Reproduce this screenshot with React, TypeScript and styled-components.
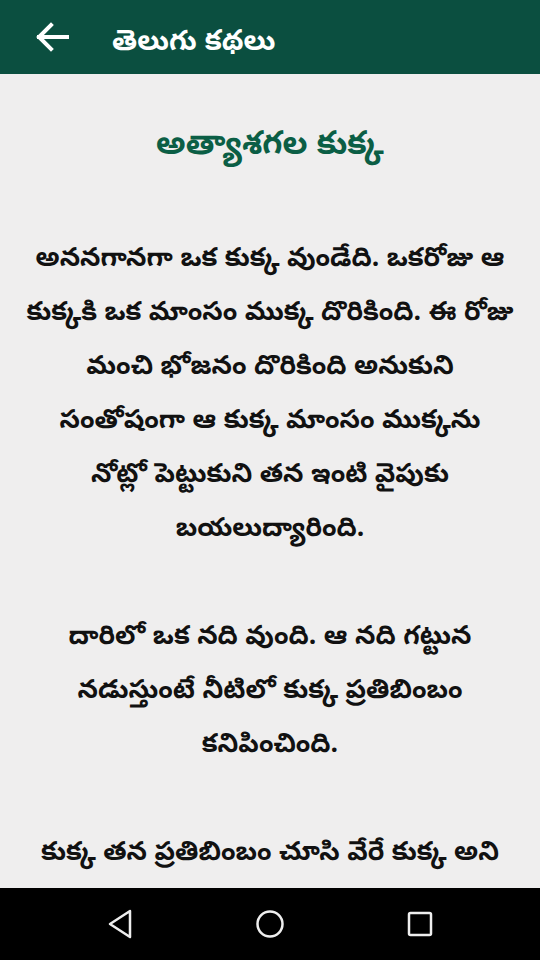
import styled, { createGlobalStyle } from "styled-components"

const GlobalStyle = createGlobalStyle`
    html, body {
        margin: 0;
        padding: 0;
        background-color: #efeeee;
    }
    body {
        font-family: "Noto Sans Telugu", "Noto Sans", sans-serif;
    }
`

const Screen = styled.div`
    width: 540px;
    height: 960px;
    display: flex;
    flex-direction: column;
    overflow: hidden;
    background-color: #efeeee;
`

const AppBar = styled.header`
    height: 74px;
    flex-shrink: 0;
    display: flex;
    align-items: center;
    background-color: #0b4f40;
    color: #ffffff;
`

const BackButton = styled.button`
    width: 56px;
    height: 56px;
    margin-left: 24px;
    padding: 0;
    border: none;
    background: none;
    display: flex;
    align-items: center;
    justify-content: center;
    cursor: pointer;
`

const BarTitle = styled.h1`
    margin: 14px 0 0 32px;
    font-size: 28.5px;
    font-weight: 700;
    color: #ffffff;
`

const Content = styled.main`
    flex: 1;
    overflow: hidden;
    padding: 0 8px;
    text-align: center;
`

const StoryTitle = styled.h2`
    margin: 48px 0 60px;
    font-size: 32.5px;
    font-weight: 700;
    line-height: 52px;
    color: #0b5e45;
`

const Paragraph = styled.p`
    margin: 0 0 54px;
    font-size: 26.5px;
    font-weight: 700;
    line-height: 54px;
    color: #111111;
`

const Line = styled.span`
    display: block;
    white-space: nowrap;
`

const NavBar = styled.nav`
    height: 72px;
    flex-shrink: 0;
    display: flex;
    align-items: center;
    justify-content: center;
    gap: 110px;
    background-color: #000000;
`

const NavKey = styled.div`
    width: 40px;
    height: 40px;
    display: flex;
    align-items: center;
    justify-content: center;
`

// lines as the phone app wraps them (the rest scrolls under the nav bar)
const paragraphs = [
    [
        "అననగానగా ఒక కుక్క వుండేది. ఒకరోజు ఆ",
        "కుక్కకి ఒక మాంసం ముక్క దొరికింది. ఈ రోజు",
        "మంచి భోజనం దొరికింది అనుకుని",
        "సంతోషంగా ఆ కుక్క మాంసం ముక్కను",
        "నోట్లో పెట్టుకుని తన ఇంటి వైపుకు",
        "బయలుద్యారింది.",
    ],
    [
        "దారిలో ఒక నది వుంది. ఆ నది గట్టున",
        "నడుస్తుంటే నీటిలో కుక్క ప్రతిబింబం",
        "కనిపించింది.",
    ],
    [
        "కుక్క తన ప్రతిబింబం చూసి వేరే కుక్క అని",
    ],
]

export default function App() {
    return (
        <>
            <GlobalStyle />
            <Screen>
                <AppBar>
                    <BackButton aria-label="back">
                        <svg width="34" height="30" viewBox="0 0 34 30" fill="none">
                            <path d="M32 15H4M16 3L4 15L16 27" stroke="#ffffff" strokeWidth="4" strokeLinecap="square" />
                        </svg>
                    </BackButton>
                    <BarTitle>తెలుగు కథలు</BarTitle>
                </AppBar>
                <Content>
                    <StoryTitle>అత్యాశగల కుక్క</StoryTitle>
                    {paragraphs.map((lines, i) => (
                        <Paragraph key={i}>
                            {lines.map((line, j) => (
                                <Line key={j}>{line}</Line>
                            ))}
                        </Paragraph>
                    ))}
                </Content>
                <NavBar>
                    <NavKey>
                        <svg width="26" height="30" viewBox="0 0 26 30" fill="none">
                            <path d="M23 2L3 15L23 28Z" stroke="#eeeeee" strokeWidth="2.5" strokeLinejoin="round" />
                        </svg>
                    </NavKey>
                    <NavKey>
                        <svg width="30" height="30" viewBox="0 0 30 30" fill="none">
                            <circle cx="15" cy="15" r="12.5" stroke="#eeeeee" strokeWidth="2.5" />
                        </svg>
                    </NavKey>
                    <NavKey>
                        <svg width="26" height="26" viewBox="0 0 26 26" fill="none">
                            <rect x="2" y="2" width="22" height="22" rx="1.5" stroke="#eeeeee" strokeWidth="2.5" />
                        </svg>
                    </NavKey>
                </NavBar>
            </Screen>
        </>
    )
}
